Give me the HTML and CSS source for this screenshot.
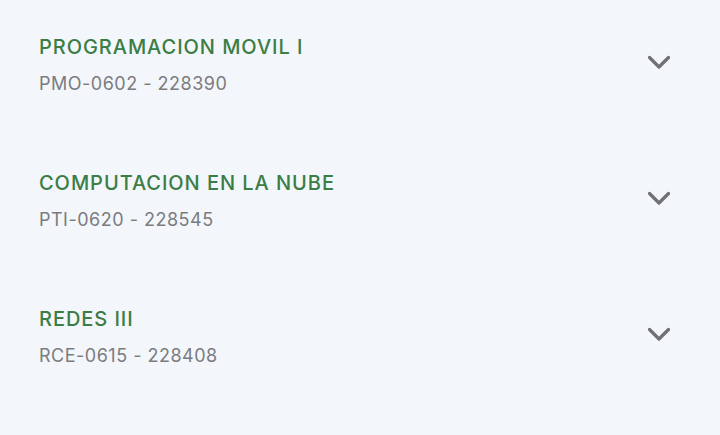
FILE: index.html
```html
<!DOCTYPE html>
<html lang="es">
<head>
<meta charset="utf-8">
<link rel="stylesheet" href="styles.css">
</head>
<body>
<ul class="list">
  <li class="item">
    <div class="info">
      <div class="title">PROGRAMACION MOVIL I</div>
      <div class="code">PMO-0602 - 228390</div>
    </div>
    <svg class="chev" viewBox="0 0 26 20" width="26" height="20"><path d="M3.5 4.5l9.5 9.5 9.5-9.5" fill="none" stroke="currentColor" stroke-width="3.2" stroke-linecap="round" stroke-linejoin="round"/></svg>
  </li>
  <li class="item">
    <div class="info">
      <div class="title">COMPUTACION EN LA NUBE</div>
      <div class="code">PTI-0620 - 228545</div>
    </div>
    <svg class="chev" viewBox="0 0 26 20" width="26" height="20"><path d="M3.5 4.5l9.5 9.5 9.5-9.5" fill="none" stroke="currentColor" stroke-width="3.2" stroke-linecap="round" stroke-linejoin="round"/></svg>
  </li>
  <li class="item">
    <div class="info">
      <div class="title">REDES III</div>
      <div class="code">RCE-0615 - 228408</div>
    </div>
    <svg class="chev" viewBox="0 0 26 20" width="26" height="20"><path d="M3.5 4.5l9.5 9.5 9.5-9.5" fill="none" stroke="currentColor" stroke-width="3.2" stroke-linecap="round" stroke-linejoin="round"/></svg>
  </li>
</ul>
</body>
</html>
```
FILE: styles.css
```css
html, body {
  margin: 0;
  padding: 0;
  background: #f3f6fa;
  width: 720px;
  height: 435px;
  overflow: hidden;
}
body {
  font-family: Inter, "Open Sans", sans-serif;
}
.list {
  list-style: none;
  margin: 0;
  padding: 0;
}
.item {
  height: 136px;
  display: flex;
  align-items: flex-start;
  justify-content: space-between;
  padding: 33px 48px 0 39px;
  box-sizing: border-box;
}
.title {
  color: #3b7d46;
  font-size: 20px;
  font-weight: 500;
  line-height: 28px;
  letter-spacing: 0.95px;
}
.code {
  color: #7b7c80;
  font-size: 18px;
  line-height: 24px;
  letter-spacing: 0.5px;
  margin-top: 11px;
}
.chev {
  color: #6f7073;
  margin-top: 20px;
}
```
